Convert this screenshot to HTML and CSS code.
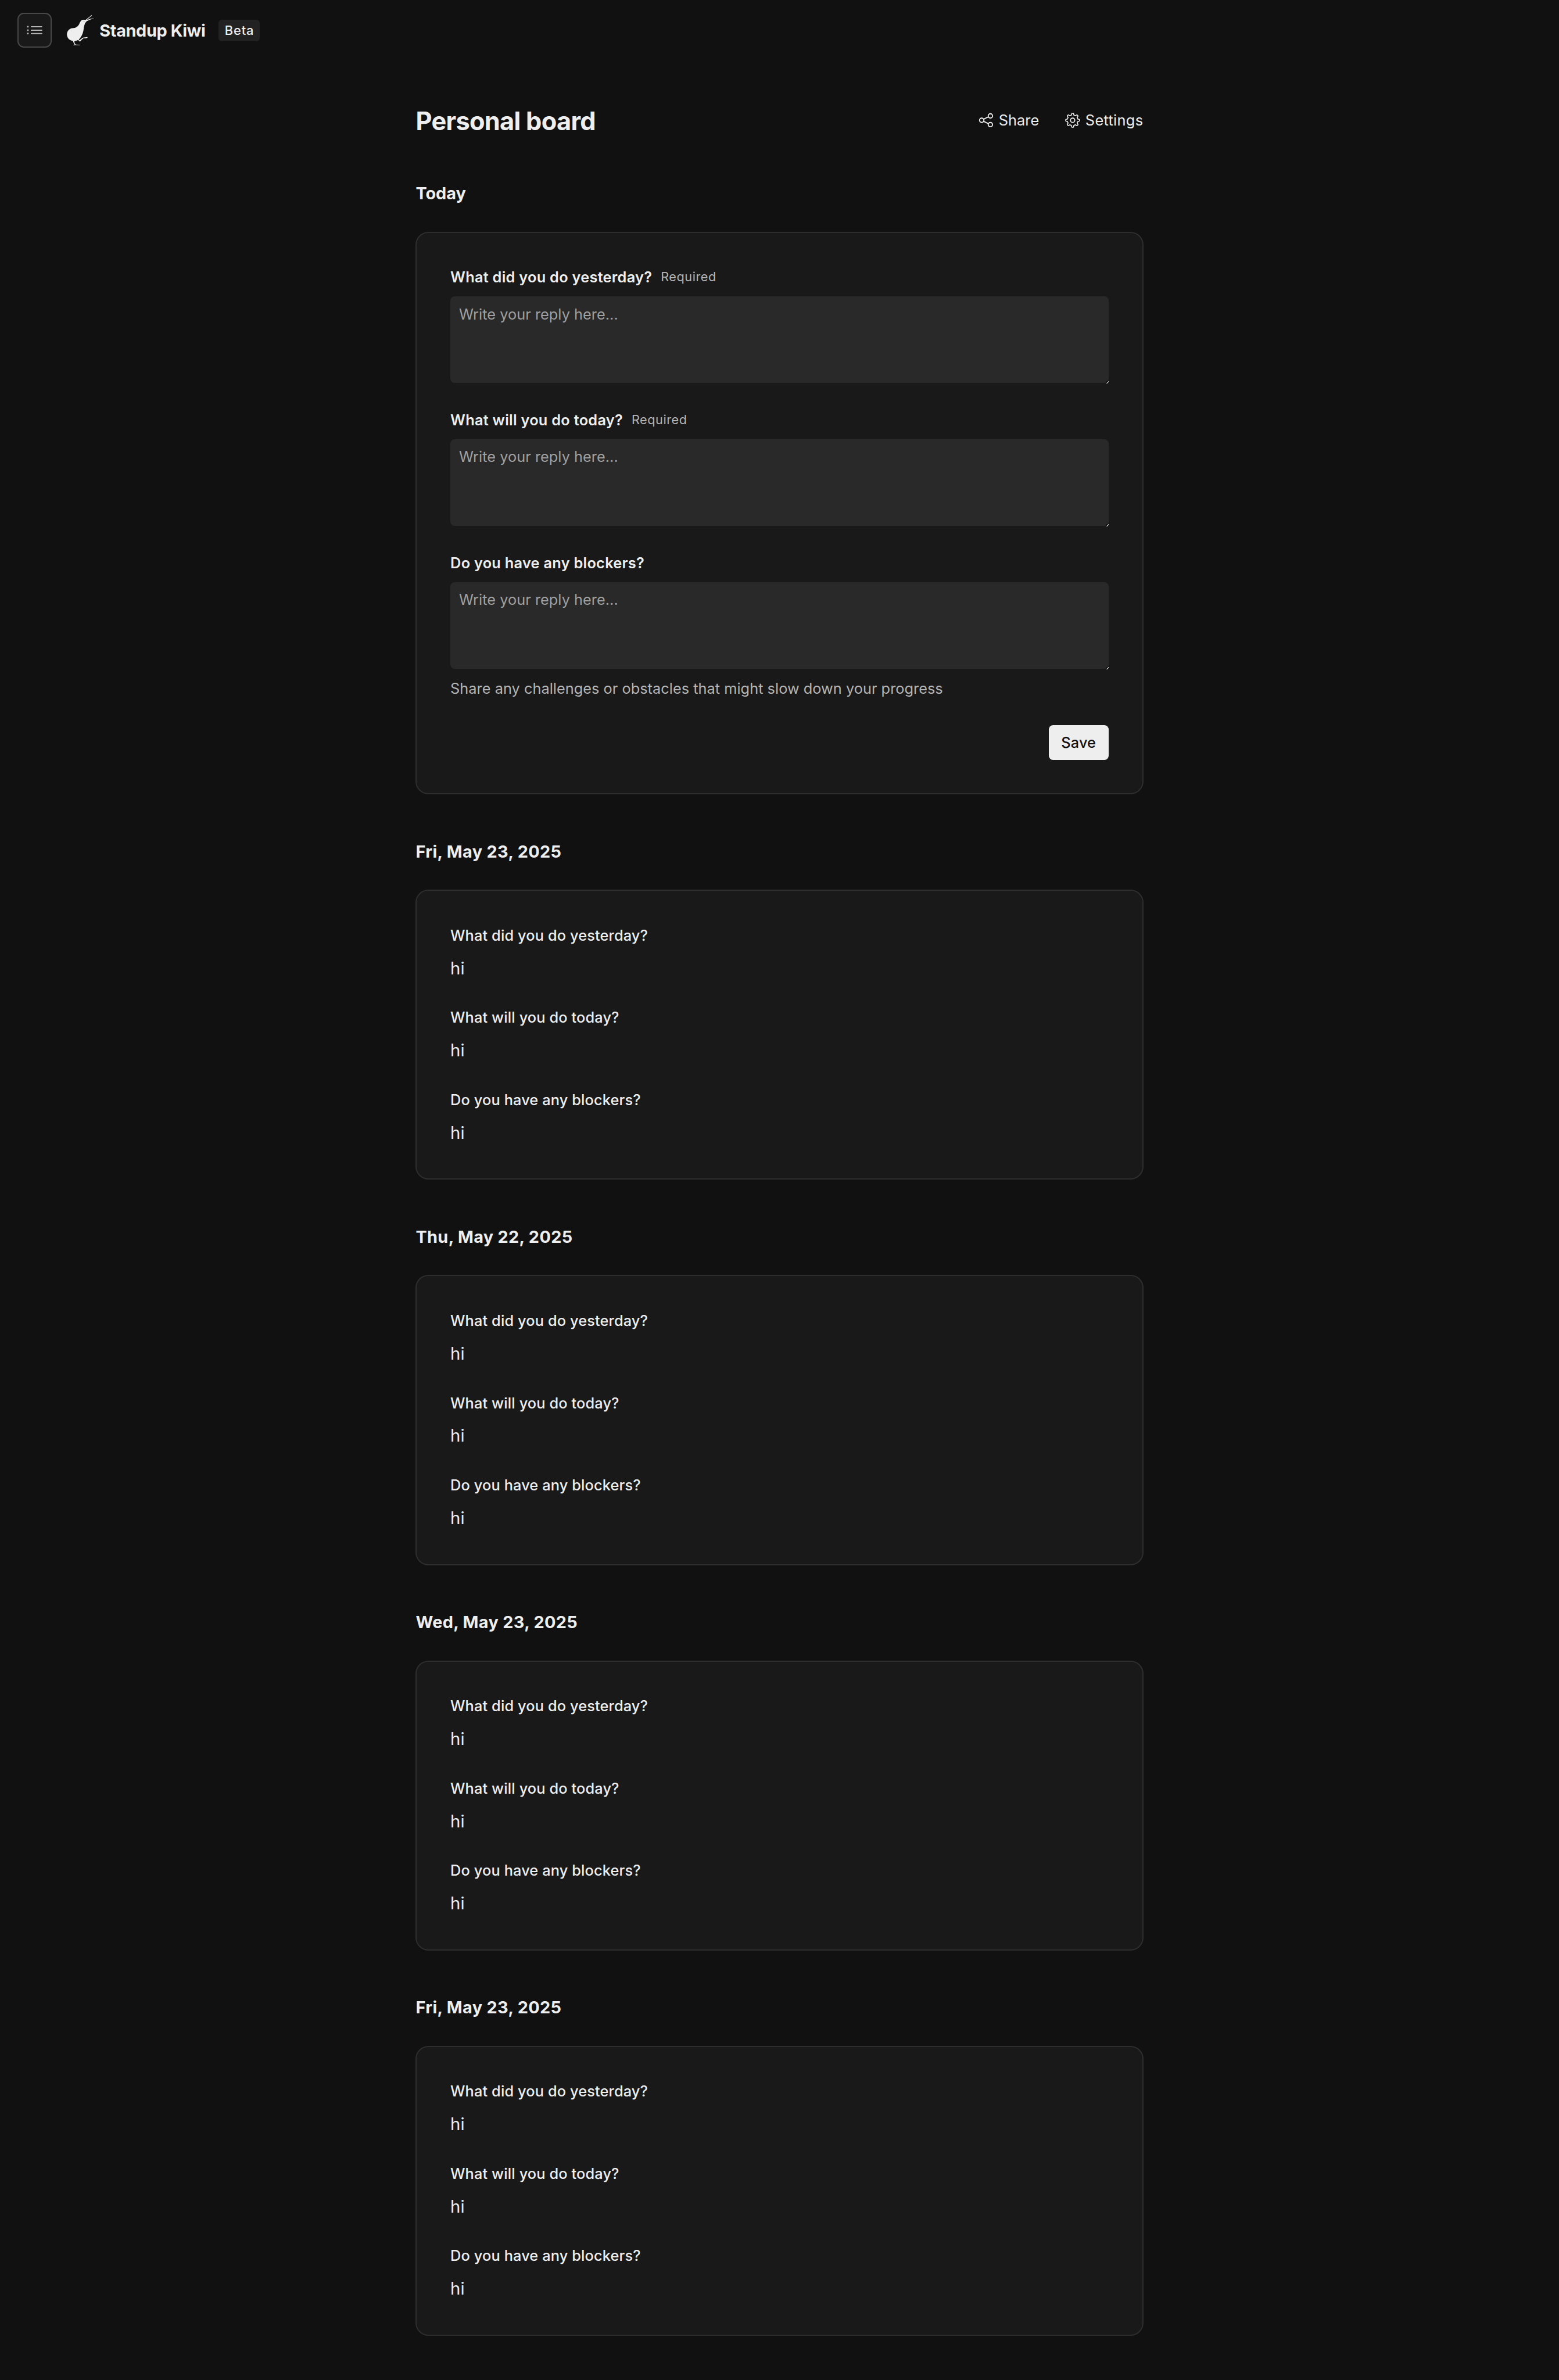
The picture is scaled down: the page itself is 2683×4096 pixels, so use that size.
FILE: index.html
```html
<!DOCTYPE html>
<html lang="en">
<head>
<meta charset="utf-8">
<title>Personal board - Standup Kiwi</title>
<link rel="stylesheet" href="styles.css">
</head>
<body>
<header class="topbar">
  <button class="menu-button" aria-label="Boards">
    <svg class="menu-icon" viewBox="0 0 15 15"><path fill="currentColor" d="M1.5 5.25a.75.75 0 1 0 0-1.5.75.75 0 0 0 0 1.5ZM4 4.5a.5.5 0 0 1 .5-.5h9a.5.5 0 0 1 0 1h-9a.5.5 0 0 1-.5-.5ZM4.5 7a.5.5 0 0 0 0 1h9a.5.5 0 0 0 0-1h-9ZM4.500 10a.5.5 0 0 0 0 1h9a.5.5 0 0 0 0-1h-9ZM2.250 7.500a.75.75 0 1 1-1.5 0 .75.75 0 0 1 1.5 0ZM1.500 11.250a.75.75 0 1 0 0-1.500.75.75 0 0 0 0 1.500Z"/></svg>
  </button>
  <a class="brand">
    <svg class="logo" viewBox="360 78 168 180">
      <path fill="currentColor" d="M370 190C371 175 379 165 389 160C397 156 405 156 414 155C425 152 433 144 438 135C443 125 446 114 456 111C462 109 470 110 474 111L508 84L509 86L480 112Q498 104 518 102L518 104Q499 108 480 118C476 122 473 126 470 132C466 142 464 151 463 162C461 178 456 194 448 205C444 211 440 216 436 220L439 224L459 209L483 206L485 209L476 213L462 213L451 222L446 229L440 231L438 226L431 223C426 226 420 227 412 229C411 234 412 239 419 248L444 249V251H406V249L413 248C408 242 406 235 404 228C385 225 371 213 370 190Z"/>
      <circle class="logo-eye" cx="465" cy="120" r="2.5"/>
    </svg>
    <span class="brand-name">Standup Kiwi</span>
  </a>
  <span class="badge">Beta</span>
</header>

<main class="page">
  <div class="page-header">
    <h1 class="page-title">Personal board</h1>
    <nav class="actions">
      <a class="action">
        <svg class="action-icon" viewBox="0 0 15 15" fill="none" stroke="currentColor"><circle cx="3.5" cy="7.5" r="2"/><circle cx="11.5" cy="3.500" r="2"/><circle cx="11.5" cy="11.500" r="2"/><path d="M5.300 6.500l4.400-2.200M5.300 8.500l4.400 2.200"/></svg>
        <span class="share-label">Share</span>
      </a>
      <a class="action">
        <svg class="action-icon" viewBox="0 0 15 15"><path fill="currentColor" fill-rule="evenodd" d="M7.07095 0.650238C6.67391 0.650238 6.32977 0.925096 6.24198 1.31231L6.0039 2.36247C5.6249 2.47269 5.26335 2.62363 4.92436 2.81013L4.01335 2.23585C3.67748 2.02413 3.23978 2.07312 2.95903 2.35386L2.35294 2.95996C2.0722 3.2407 2.0232 3.6784 2.23493 4.01427L2.80942 4.92561C2.62307 5.2645 2.47227 5.62594 2.36216 6.00481L1.31209 6.24287C0.924883 6.33065 0.650024 6.6748 0.650024 7.07183V7.92897C0.650024 8.32601 0.924883 8.67015 1.31209 8.75794L2.36228 8.99603C2.47246 9.375 2.62335 9.73652 2.80979 10.0755L2.2354 10.9867C2.02367 11.3225 2.07267 11.7602 2.35341 12.041L2.95951 12.6471C3.24025 12.9278 3.67795 12.9768 4.01382 12.7651L4.92506 12.1907C5.26384 12.377 5.62516 12.5278 6.0039 12.6379L6.24198 13.6881C6.32977 14.0753 6.67391 14.3502 7.07095 14.3502H7.92809C8.32512 14.3502 8.66927 14.0753 8.75705 13.6881L8.99505 12.6383C9.37411 12.5282 9.73573 12.3773 10.0748 12.1909L10.986 12.7653C11.3218 12.977 11.7595 12.928 12.0403 12.6473L12.6464 12.0412C12.9271 11.7604 12.9761 11.3227 12.7644 10.9869L12.1902 10.076C12.3768 9.73688 12.5278 9.37515 12.638 8.99596L13.6879 8.75794C14.0751 8.67015 14.35 8.32601 14.35 7.92897V7.07183C14.35 6.6748 14.0751 6.33065 13.6879 6.24287L12.6381 6.00488C12.528 5.62578 12.3771 5.26414 12.1906 4.92507L12.7648 4.01407C12.9766 3.6782 12.9276 3.2405 12.6468 2.95975L12.0407 2.35366C11.76 2.07292 11.3223 2.02392 10.9864 2.23565L10.0755 2.80989C9.73622 2.62328 9.37437 2.47229 8.99505 2.36209L8.75705 1.31231C8.66927 0.925096 8.32512 0.650238 7.92809 0.650238H7.07095ZM4.92053 3.81251C5.44724 3.44339 6.05665 3.18424 6.71543 3.06839L7.07095 1.50024H7.92809L8.28355 3.06816C8.94267 3.18387 9.5524 3.44302 10.0794 3.81224L11.4397 2.9547L12.0458 3.56079L11.1882 4.92117C11.5573 5.44798 11.8164 6.0575 11.9321 6.71638L13.5 7.07183V7.92897L11.932 8.28444C11.8162 8.94342 11.557 9.55301 11.1878 10.0798L12.0453 11.4402L11.4392 12.0462L10.0787 11.1886C9.55192 11.5576 8.94241 11.8166 8.28355 11.9323L7.92809 13.5002H7.07095L6.71543 11.932C6.0569 11.8162 5.44734 11.5572 4.92053 11.1883L3.56019 12.0462L2.9541 11.4401L3.81195 10.0798C3.44263 9.55307 3.18338 8.94339 3.06764 8.28444L1.50002 7.92897V7.07183L3.0682 6.71629C3.18388 6.05764 3.44283 5.44838 3.8117 4.9216L2.95388 3.56069L3.55998 2.9546L4.92053 3.81251Z"/><circle cx="7.5" cy="7.5" r="2" fill="none" stroke="currentColor" stroke-width=".95"/></svg>
        <span class="settings-label">Settings</span>
      </a>
    </nav>
  </div>

  <section class="day">
    <h2 class="day-title today">Today</h2>
    <form class="card">
      <div class="field">
        <div class="field-head"><label class="field-label" for="a1">What did you do yesterday?</label><span class="required">Required</span></div>
        <div class="input-wrap"><textarea class="input" id="a1" placeholder="Write your reply here..."></textarea></div>
      </div>
      <div class="field">
        <div class="field-head"><label class="field-label" for="a2">What will you do today?</label><span class="required">Required</span></div>
        <div class="input-wrap"><textarea class="input" id="a2" placeholder="Write your reply here..."></textarea></div>
      </div>
      <div class="field">
        <div class="field-head"><label class="field-label" for="a3">Do you have any blockers?</label></div>
        <div class="input-wrap"><textarea class="input" id="a3" placeholder="Write your reply here..."></textarea></div>
        <p class="hint">Share any challenges or obstacles that might slow down your progress</p>
      </div>
      <div class="form-actions"><button class="save" type="button">Save</button></div>
    </form>
  </section>

  <section class="day">
    <h2 class="day-title">Fri, May 23, 2025</h2>
    <div class="card">
      <div class="entry"><h3 class="question">What did you do yesterday?</h3><p class="answer">hi</p></div>
      <div class="entry"><h3 class="question">What will you do today?</h3><p class="answer">hi</p></div>
      <div class="entry"><h3 class="question">Do you have any blockers?</h3><p class="answer">hi</p></div>
    </div>
  </section>

  <section class="day">
    <h2 class="day-title">Thu, May 22, 2025</h2>
    <div class="card">
      <div class="entry"><h3 class="question">What did you do yesterday?</h3><p class="answer">hi</p></div>
      <div class="entry"><h3 class="question">What will you do today?</h3><p class="answer">hi</p></div>
      <div class="entry"><h3 class="question">Do you have any blockers?</h3><p class="answer">hi</p></div>
    </div>
  </section>

  <section class="day">
    <h2 class="day-title">Wed, May 23, 2025</h2>
    <div class="card">
      <div class="entry"><h3 class="question">What did you do yesterday?</h3><p class="answer">hi</p></div>
      <div class="entry"><h3 class="question">What will you do today?</h3><p class="answer">hi</p></div>
      <div class="entry"><h3 class="question">Do you have any blockers?</h3><p class="answer">hi</p></div>
    </div>
  </section>

  <section class="day">
    <h2 class="day-title">Fri, May 23, 2025</h2>
    <div class="card">
      <div class="entry"><h3 class="question">What did you do yesterday?</h3><p class="answer">hi</p></div>
      <div class="entry"><h3 class="question">What will you do today?</h3><p class="answer">hi</p></div>
      <div class="entry"><h3 class="question">Do you have any blockers?</h3><p class="answer">hi</p></div>
    </div>
  </section>
</main>
</body>
</html>
```
FILE: styles.css
```css
/* 1rem is 1/28.8 of the window width, so the whole page scales with it */
:root {
  font-size: calc(100vw / 28.8);
  --bg: #111111;
  --panel: #191919;
  --badge: #222222;
  --input: #292929;
  --line: #2e2e2e;
  --line-strong: #484848;
  --muted: #b4b4b4;
  --text: #eeeeee;
}

* { box-sizing: border-box; margin: 0; padding: 0; }

html { overflow: hidden; background: var(--bg); }

body {
  background: var(--bg);
  color: var(--text);
  font-family: Inter, "Liberation Sans", sans-serif;
  font-size: 0.272rem;
  line-height: 0.4rem;
}

button, textarea { font: inherit; border: 0; }
svg { display: block; flex: none; }

.topbar {
  display: flex;
  align-items: center;
  height: 1.12rem;
  padding-left: 0.32rem;
}

.menu-button {
  display: flex;
  align-items: center;
  justify-content: center;
  width: 0.64rem;
  height: 0.64rem;
  margin-right: 0.24rem;
  background: var(--panel);
  border: 2px solid var(--line-strong);
  border-radius: 0.12rem;
  color: var(--muted);
}

.menu-icon { width: 0.32rem; height: 0.32rem; }

.brand { display: flex; align-items: center; gap: 0.08rem; }
.logo { width: 0.56rem; height: 0.6rem; }
.logo-eye { fill: #777777; }

.brand-name {
  padding-top: 0.02rem;
  font-size: 0.31rem;
  font-weight: 700;
  line-height: 0.48rem;
  letter-spacing: -0.0135em;
}

.badge {
  height: 0.4rem;
  width: 0.77rem;
  margin-left: 0.24rem;
  padding-left: 0.12rem;
  background: var(--badge);
  border-radius: 0.06rem;
  font-size: 0.235rem;
  font-weight: 450;
  letter-spacing: 0.038em;
}

.page {
  display: flex;
  flex-direction: column;
  gap: 0.8rem;
  width: 13.44rem;
  margin: 0 auto;
  padding: 0.8rem 0;
}

.page-header { display: flex; align-items: center; justify-content: space-between; }

.page-title {
  padding-top: 0.03rem;
  font-size: 0.465rem;
  font-weight: 700;
  line-height: 0.57rem;
  letter-spacing: -0.0163em;
}

.actions { display: flex; gap: 0.48rem; }
.action { display: flex; align-items: center; gap: 0.08rem; }
.action-icon { width: 0.3rem; height: 0.3rem; }
.share-label { width: 0.74rem; }
.settings-label { width: 1.07rem; letter-spacing: 0.0122em; }

.day { display: flex; flex-direction: column; gap: 0.48rem; }

.day-title {
  padding-top: 0.03rem;
  font-size: 0.31rem;
  font-weight: 700;
  line-height: 0.45rem;
  letter-spacing: 0.0115em;
}
.day-title.today { letter-spacing: -0.002em; }

.card {
  display: flex;
  flex-direction: column;
  gap: 0.48rem;
  padding: calc(0.64rem - 2px);
  background: var(--panel);
  border: 2px solid var(--line);
  border-radius: 0.24rem;
}

.field { display: flex; flex-direction: column; gap: 0.16rem; }
.field-head { display: flex; gap: 0.16rem; }
.field-label { font-weight: 600; letter-spacing: 0.0105em; }
.required { color: var(--muted); font-size: 0.233rem; letter-spacing: 0.025em; }

.input-wrap { position: relative; height: 1.6rem; }

/* the corner of the resize grip that shows past the rounded edge */
.input-wrap::after {
  content: "";
  position: absolute;
  right: 0;
  bottom: -1px;
  width: 4px;
  height: 4px;
  background: linear-gradient(135deg, #111111 40%, #bbbbbb 40%, #bbbbbb 70%, transparent 70%);
}

.input {
  display: block;
  width: 100%;
  height: 100%;
  padding: 0.12rem 0.16rem;
  background: var(--input);
  border-radius: 0.08rem;
  color: var(--text);
  letter-spacing: 0.001em;
  resize: none;
  outline: 0;
}
.input::placeholder { color: #a0a0a0; opacity: 1; }

.hint { color: var(--muted); letter-spacing: 0.0008em; }

.form-actions { display: flex; justify-content: flex-end; }

.save {
  width: 1.11rem;
  height: 0.64rem;
  background: var(--text);
  border-radius: 0.08rem;
  color: var(--bg);
  font-weight: 500;
  letter-spacing: 0.0048em;
}

.entry { display: flex; flex-direction: column; gap: 0.16rem; }
.question { font-size: inherit; font-weight: 500; letter-spacing: 0.005em; }
.answer { padding-top: 0.04rem; font-size: 0.315rem; line-height: 0.44rem; }
```
